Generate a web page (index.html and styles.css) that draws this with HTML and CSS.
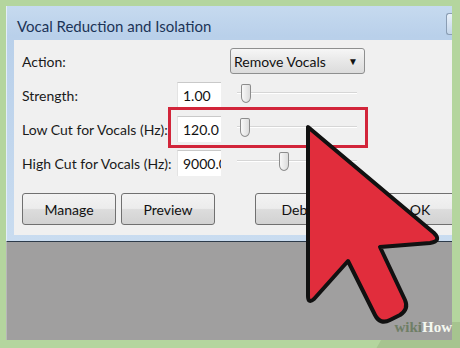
FILE: index.html
```html
<!DOCTYPE html>
<html lang="en">

<head>
    <meta charset="UTF-8">
    <meta name="viewport" content="width=device-width, initial-scale=1.0">
    <title>Vocal Reduction and Isolation</title>
    <link rel="stylesheet" href="styles.css">
</head>

<body>
    <div class="stage">
        <div class="dialog">
            <div class="titlebar">
                <span class="title">Vocal Reduction and Isolation</span>
                <span class="close-btn"></span>
            </div>
            <div class="content">
                <div class="form">
                    <div class="label">Action:</div>
                    <div class="select">
                        <span>Remove Vocals</span>
                        <span class="caret">&#9660;</span>
                    </div>

                    <div class="label">Strength:</div>
                    <div class="input">1.00</div>
                    <div class="slider"><span class="thumb" style="left:4px"></span></div>

                    <div class="label">Low Cut for Vocals (Hz):</div>
                    <div class="input">120.0</div>
                    <div class="slider"><span class="thumb" style="left:3px"></span></div>

                    <div class="label">High Cut for Vocals (Hz):</div>
                    <div class="input">9000.0</div>
                    <div class="slider"><span class="thumb" style="left:42px"></span></div>
                </div>
                <div class="btn-all">
                    <button class="btn">Manage</button>
                    <button class="btn">Preview</button>
                    <button class="btn btn-right">Debug</button>
                    <button class="btn btn-ok">OK</button>
                </div>
            </div>
        </div>
        <div class="desk"></div>
    </div>

    <div class="highlight"></div>

    <svg class="arrow" width="460" height="348" viewBox="0 0 460 348">
        <path d="M308,127 L308,296 Q308,304 314,299 L348,261 L375,315 Q380,325 390,320 L400,315 Q409,309 405,300 L380,247 L430,243 Q442,241 434,233 Z"
            fill="#e12d3c" stroke="#111" stroke-width="4" stroke-linejoin="round" />
    </svg>

    <div class="logo"><span class="wiki">wiki</span><span class="how">How</span></div>
</body>

</html>
```

FILE: styles.css
```css
* {
    box-sizing: border-box;
}

body {
    margin: 0;
    width: 460px;
    height: 348px;
    background-color: #b4d59e;
    font-family: Lato, "Liberation Sans", sans-serif;
    overflow: hidden;
    position: relative;
}

.stage {
    padding: 6px 8px 0 6px;
}

.dialog {
    height: 236px;
    background: linear-gradient(#c6daef, #b9d0ea 30px, #c9dcf0);
    border-left: 1px solid #e4eef8;
    border-bottom: 1px solid #2d3b4a;
    display: flex;
    flex-direction: column;
    overflow: hidden;
}

.titlebar {
    height: 34px;
    display: flex;
    align-items: center;
    justify-content: space-between;
    padding: 5px 0 0 10px;
}

.title {
    font-size: 15px;
    color: #1c3457;
}

.close-btn {
    width: 6px;
    height: 22px;
    margin-top: -3px;
    border: 1px solid #8a9db3;
    border-right: none;
    border-radius: 3px 0 0 3px;
    background: linear-gradient(#e9f1fa, #c4d6ea);
}

.content {
    flex: 1;
    margin: 0 0 6px 7px;
    background-color: #f0f0f0;
    padding: 4px 0 0 8px;
}

.form {
    display: grid;
    grid-template-columns: 155px 44px 1fr;
    grid-auto-rows: 34px;
    align-items: center;
}

.label {
    font-size: 14px;
    color: #1a1a1a;
    white-space: nowrap;
}

.select {
    grid-column: 2 / 4;
    margin-left: 53px;
    width: 135px;
    height: 26px;
    border: 1px solid #8e8f8f;
    border-radius: 3px;
    background: linear-gradient(#f6f6f6, #e8e8e8 50%, #dcdcdc);
    display: flex;
    align-items: center;
    justify-content: space-between;
    padding: 0 6px 0 3px;
    font-size: 14px;
    color: #111;
}

.caret {
    font-size: 10px;
}

.input {
    height: 26px;
    background-color: #fff;
    border-top: 1px solid #c9c9c9;
    border-left: 1px solid #e3e3e3;
    font-size: 14px;
    color: #111;
    padding: 4px 0 0 5px;
    white-space: nowrap;
    overflow: hidden;
}

.slider {
    position: relative;
    margin-left: 16px;
    width: 120px;
    height: 2px;
    background-color: #d6d6d6;
    border-bottom: 1px solid #fff;
    margin-top: -4px;
}

.thumb {
    position: absolute;
    top: -8px;
    width: 10px;
    height: 19px;
    background: linear-gradient(90deg, #f8f8f8, #dcdcdc);
    border: 1px solid #8c8c8c;
    border-radius: 2px 2px 5px 5px / 2px 2px 6px 6px;
}

.btn-all {
    display: flex;
    gap: 5px;
    margin-top: 13px;
}

.btn {
    flex-shrink: 0;
    width: 94px;
    height: 32px;
    border: 1px solid #707070;
    border-radius: 3px;
    background: linear-gradient(#f3f3f3, #ececec 48%, #dcdcdc 52%, #d2d2d2);
    font-family: Lato, "Liberation Sans", sans-serif;
    font-size: 14px;
    color: #111;
    padding: 0;
}

.btn-right {
    margin-left: 35px;
}

.btn-ok {
    margin-left: 19px;
}

.desk {
    height: 98px;
    background-color: #a09f9f;
    border-left: 1px solid #b8b8b8;
}

.highlight {
    position: absolute;
    left: 168px;
    top: 107px;
    width: 200px;
    height: 41px;
    border: 3px solid #d2253a;
}

.arrow {
    position: absolute;
    left: 0;
    top: 0;
}

.logo {
    position: absolute;
    right: 8px;
    top: 319px;
    font-family: "Liberation Serif", serif;
    font-weight: bold;
    font-size: 15px;
}

.logo::before {
    content: "";
    position: absolute;
    left: -10px;
    right: -20px;
    top: 3px;
    bottom: -12px;
    background-color: #a6c48f;
    transform: skewX(-30deg);
    z-index: -1;
}

.wiki {
    color: #6f7e66;
}

.how {
    color: #f4f8f0;
}
```
